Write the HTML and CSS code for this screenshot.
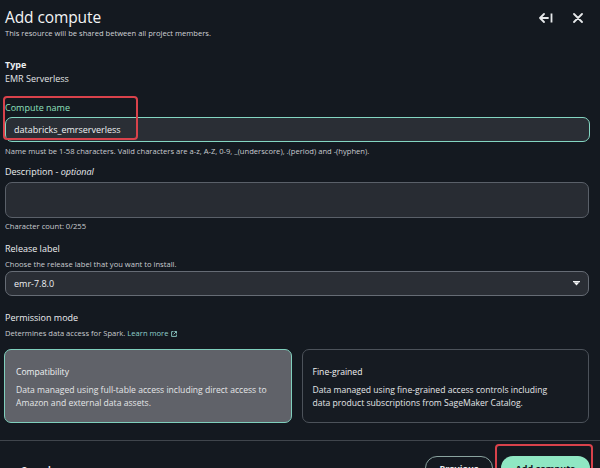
FILE: index.html
```html
<!DOCTYPE html>
<html lang="en">
<head>
<meta charset="utf-8">
<title>Add compute</title>
<link rel="stylesheet" href="styles.css">
</head>
<body>
<div class="panel">
  <header class="head">
    <div class="head-text">
      <h1 class="title">Add compute</h1>
      <p class="subtitle">This resource will be shared between all project members.</p>
    </div>
    <div class="head-actions">
      <svg class="icon-collapse" width="14" height="10" viewBox="0 0 14 10" aria-hidden="true">
        <path d="M5 1 L1 5 L5 9 M1 5 H9" fill="none" stroke="#e6e8ea" stroke-width="1.8" stroke-linecap="round" stroke-linejoin="round"/>
        <path d="M12.5 0.5 V9.5" stroke="#e6e8ea" stroke-width="1.8"/>
      </svg>
      <svg class="icon-close" width="10" height="10" viewBox="0 0 10 10" aria-hidden="true">
        <path d="M1 1 L9 9 M9 1 L1 9" stroke="#e6e8ea" stroke-width="1.8" stroke-linecap="round"/>
      </svg>
    </div>
  </header>

  <section class="field field-type">
    <div class="label label-bold">Type</div>
    <div class="value">EMR Serverless</div>
  </section>

  <section class="field field-name">
    <div class="label label-focus">Compute name</div>
    <div class="input input-focus">databricks_emrserverless</div>
    <div class="hint">Name must be 1-58 characters. Valid characters are a-z, A-Z, 0-9, _(underscore), .(period) and -(hyphen).</div>
  </section>

  <section class="field field-desc">
    <div class="label">Description - <i>optional</i></div>
    <div class="textarea"></div>
    <div class="hint hint-count">Character count: 0/255</div>
  </section>

  <section class="field field-release">
    <div class="label">Release label</div>
    <div class="hint hint-top">Choose the release label that you want to install.</div>
    <div class="select">
      <span>emr-7.8.0</span>
      <svg class="caret" width="7" height="5" viewBox="0 0 7 5" aria-hidden="true">
        <path d="M0 0 H7 V1.2 H0 Z M0.8 1.6 H6.2 L3.5 4.6 Z" fill="#f2f3f4"/>
      </svg>
    </div>
  </section>

  <section class="field field-perm">
    <div class="label">Permission mode</div>
    <div class="hint hint-top">Determines data access for Spark. <span class="link">Learn more
      <svg class="ext" width="6" height="6" viewBox="0 0 6 6" aria-hidden="true">
        <path d="M2.5 0.6 H0.6 V5.4 H5.4 V3.5" fill="none" stroke="#8fcfca" stroke-width="0.9"/>
        <path d="M3.4 0.5 H5.5 V2.6 M5.4 0.6 L2.6 3.4" fill="none" stroke="#8fcfca" stroke-width="0.9"/>
      </svg></span></div>
    <div class="cards">
      <div class="card card-selected">
        <div class="card-title">Compatibility</div>
        <div class="card-desc">Data managed using full-table access including direct access to Amazon and external data assets.</div>
      </div>
      <div class="card">
        <div class="card-title">Fine-grained</div>
        <div class="card-desc">Data managed using fine-grained access controls including data product subscriptions from SageMaker Catalog.</div>
      </div>
    </div>
  </section>

  <footer class="foot">
    <span class="btn-link">Cancel</span>
    <div class="foot-right">
      <span class="btn btn-outline">Previous</span>
      <span class="btn btn-primary">Add compute</span>
    </div>
  </footer>

  <div class="mark mark-name"></div>
  <div class="mark mark-submit"></div>
</div>
</body>
</html>
```

FILE: styles.css
```css
html, body {
  margin: 0;
  padding: 0;
  background: #141920;
  height: 100%;
  overflow: hidden;
}

.panel {
  position: relative;
  width: 600px;
  height: 468px;
  box-sizing: border-box;
  padding: 0 10px 0 5px;
  font-family: "Open Sans", "Noto Sans", sans-serif;
  color: #eceef0;
  background: #141920;
  display: flex;
  flex-direction: column;
}

.head {
  display: flex;
  justify-content: space-between;
  align-items: flex-start;
}

.title {
  margin: 7px 0 0;
  font-size: 15.5px;
  line-height: 20px;
  font-weight: 400;
  letter-spacing: -0.1px;
  color: #f3f4f5;
}

.subtitle {
  margin: 1px 0 0;
  font-size: 7.6px;
  line-height: 10px;
  color: #d0d3d7;
}

.head-actions {
  display: flex;
  align-items: center;
  gap: 20px;
  margin-top: 13px;
  margin-right: 7px;
}

.label {
  font-size: 9px;
  line-height: 12px;
  color: #eceef0;
}

.label i {
  font-style: italic;
}

.label-bold {
  font-weight: 700;
}

.label-focus {
  color: #8fe0bf;
}

.value {
  margin-top: 2px;
  font-size: 9px;
  line-height: 12px;
  color: #e2e4e7;
}

.hint {
  margin-top: 4px;
  font-size: 7.6px;
  line-height: 10px;
  color: #c9ccd0;
}

.hint-count {
  margin-top: 3px;
}

.hint-top {
  margin-top: 4px;
}

.field-type {
  margin-top: 21px;
}

.field-name {
  margin-top: 17px;
}

.input {
  margin-top: 3px;
  height: 25px;
  box-sizing: border-box;
  border-radius: 7px;
  background: #2a2e35;
  border: 1px solid #656b74;
  padding: 0 8px;
  display: flex;
  align-items: center;
  font-size: 9px;
  color: #eef0f2;
}

.input-focus {
  border: 1.5px solid #84d6c2;
}

.field-desc {
  margin-top: 10px;
}

.textarea {
  margin-top: 4px;
  height: 36px;
  box-sizing: border-box;
  border-radius: 7px;
  background: #282c33;
  border: 1px solid #5a6069;
  margin-right: 1px;
}

.field-release {
  margin-top: 12px;
}

.select {
  margin-top: 2px;
  height: 25px;
  box-sizing: border-box;
  border-radius: 7px;
  background: #2a2e35;
  border: 1px solid #666c75;
  padding: 0 8px;
  margin-right: 1px;
  display: flex;
  align-items: center;
  justify-content: space-between;
  font-size: 9px;
  color: #eef0f2;
}

.field-perm {
  margin-top: 16px;
}

.link {
  color: #8fd0cb;
}

.ext {
  margin-left: 1px;
  vertical-align: -0.5px;
}

.cards {
  margin-top: 11px;
  display: grid;
  grid-template-columns: 1fr 1fr;
  gap: 10px;
  margin-left: -1px;
  margin-right: 1px;
}

.card {
  height: 74px;
  box-sizing: border-box;
  border-radius: 7px;
  border: 1px solid #4c525a;
  background: #161b22;
  padding: 16px 30px 0 10px;
}

.card-selected {
  background: #606269;
  border: 1.5px solid #7fcfbd;
  padding: 16px 6px 0 11px;
}

.card-title {
  font-size: 8.6px;
  line-height: 12px;
  color: #f1f2f3;
}

.card-desc {
  margin-top: 6px;
  font-size: 8.6px;
  line-height: 13.3px;
  color: #e4e6e8;
}

.foot {
  margin: 17px -10px 0 -5px;
  border-top: 1px solid #40454c;
  display: flex;
  justify-content: space-between;
  align-items: flex-start;
  padding: 15px 10px 0 21px;
}

.btn-link {
  margin-top: 7px;
  font-size: 9px;
  font-weight: 700;
  color: #e6e8ea;
}

.foot-right {
  display: flex;
  gap: 8px;
}

.btn {
  box-sizing: border-box;
  height: 24px;
  border-radius: 12px;
  font-size: 9px;
  font-weight: 700;
  display: flex;
  align-items: center;
  justify-content: center;
}

.btn-outline {
  width: 68px;
  border: 1.5px solid #8aa39f;
  color: #e8eaec;
}

.btn-primary {
  width: 89px;
  background: #8fe7c3;
  color: #0f141a;
}

.mark {
  position: absolute;
  border: 2px solid #d9424b;
  border-radius: 4px;
  box-sizing: border-box;
}

.mark-name {
  left: 3px;
  top: 96px;
  width: 135px;
  height: 44px;
}

.mark-submit {
  left: 495px;
  top: 444px;
  width: 98px;
  height: 40px;
}
```
